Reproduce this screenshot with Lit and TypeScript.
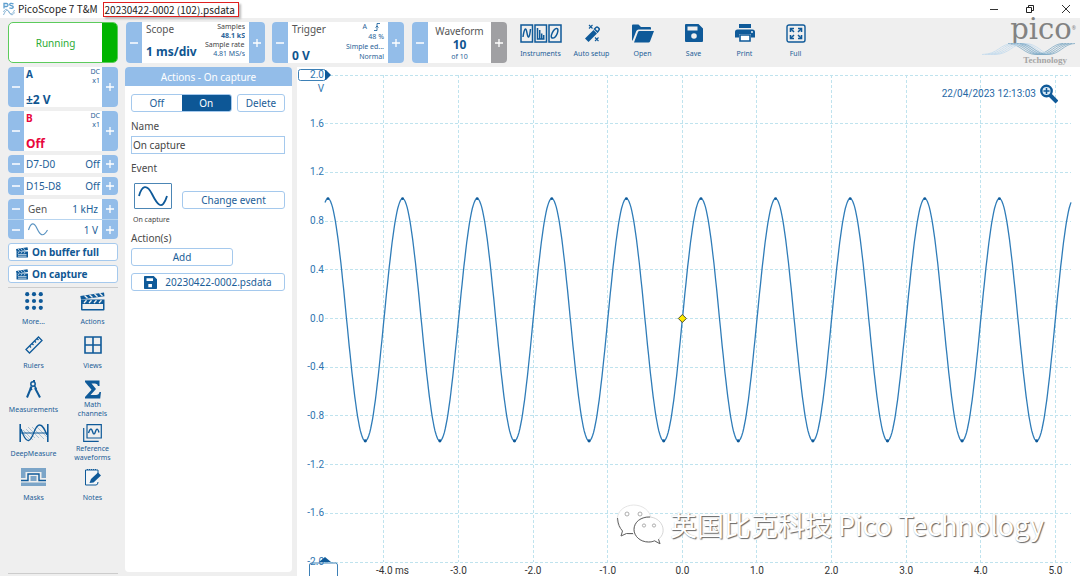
import { LitElement, html, svg, css } from "lit";
import { customElement, property, state } from "lit/decorators.js";
import { classMap } from "lit/directives/class-map.js";

const ink = "#0f5a99";

const icons = {
  app: svg`<svg width="12" height="14" viewBox="0 0 12 14"><path d="M1 6.500V1.500h2.500a1.500 1.500 0 0 1 0 3H1M10.500 1.800C8 .8 6.500 1.500 6.700 2.600c.3 1.400 3.600.8 3.600 2.500 0 1.200-2 1.600-3.900.8" fill="none" stroke="#5f9fce" stroke-width="1.300"/><path d="M.5 10c2-4 3.500-3 5.500 0s3.500 4 5.500.5M.5 13c2-5 4-6 5.500-3s3 3 5.500-2" fill="none" stroke="#86b3d3"/></svg>`,
  instruments: svg`<svg width="42" height="19" viewBox="0 0 42 19" fill="none" stroke=${ink} stroke-width="1.500"><path d="M1 1h11.500v17H1zM15 1h11.500v17H15zM29 1h12v17H29z"/><path d="M3 13C4.500 3 6 3 7 9s2.500 6 3.500-4M17.500 4v11h7M19.700 15V6M21.700 15V9.500M23.700 15v-4"/><path d="M32 14c-2-1 1-9 4.500-9.500S36.500 15 32 14z"/></svg>`,
  auto: svg`<svg width="16" height="19" viewBox="0 0 16 19"><path d="M1 14.500 9.500 6l3.500 3.500L4.500 18z" fill=${ink}/><path d="M10.500 5 12 3.500a1.500 1.500 0 0 1 2 0l.8.8a1.500 1.500 0 0 1 0 2L13.500 8z" fill="none" stroke=${ink} stroke-width="1.500"/><path d="m5 1 3.500 3.500M8.500 1 5 4.500M11 13.500l3.500 3.500M14.500 13.500 11 17" stroke=${ink} stroke-width="1.100"/></svg>`,
  open: svg`<svg width="22" height="19" viewBox="0 0 22 19"><path d="M0 17V1.500Q0 .5 1 .5h5.500L9 3h9q1 0 1 1v1.500H6.500Q5 5.500 4.300 7L1 15.500z" fill=${ink}/><path d="M2 18.500 6 8q.3-1 1.500-1H22l-4 10.500q-.4 1-1.500 1z" fill=${ink}/></svg>`,
  save: svg`<svg width="18" height="18" viewBox="0 0 18 18"><path fill-rule="evenodd" d="M1 0h12.500L18 4.500V17q0 1-1 1H1q-1 0-1-1V1q0-1 1-1zm1.500 2.500v4h10v-4zM9 9.200a2.800 2.800 0 1 0 0 5.600 2.800 2.800 0 0 0 0-5.600z" fill=${ink}/></svg>`,
  print: svg`<svg width="20" height="18" viewBox="0 0 20 18"><path d="M4 0h12v4H4zM2.500 5.500h15A2.500 2.500 0 0 1 20 8v5.500h-4V10H4v3.500H0V8a2.500 2.500 0 0 1 2.500-2.500z" fill=${ink}/><path d="M5 11h10v6H5z" fill="#fff" stroke=${ink} stroke-width="1.600"/><circle cx="17" cy="8" r=".9" fill="#fff"/></svg>`,
  full: svg`<svg width="20" height="19" viewBox="0 0 20 19" fill="none" stroke=${ink}><rect x="1" y="1" width="18" height="17" rx="2" stroke-width="1.400"/><path d="m8 8-3-3m7 3 3-3m-7 6-3 3m7-3 3 3" stroke-width="1.500"/><path d="M4.500 8V4.500H8M12 4.500h3.500V8M4.500 11v3.500H8M12 14.500h3.500V11" stroke-width="1.600"/></svg>`,
  more: svg`<svg width="18" height="18" viewBox="0 0 18 18" fill=${ink}>${[2.2, 9, 15.8].map((y) => [2.2, 9, 15.8].map((x) => svg`<circle cx=${x} cy=${y} r="2.100"/>`))}</svg>`,
  clap: svg`<svg width="25" height="19" viewBox="0 0 25 19"><path d="M.3 4 24 .5l.5 3.700L1 7.500z" fill=${ink}/><path d="M1 7.500h23.500v10q0 1-1 1H2q-1 0-1-1z" fill=${ink}/><path d="M2.500 12h20.500v5H2.500z" fill="#efefef"/><path d="m4.500 3.500 3 2.800m2-3.600 3 2.800m2-3.600 3 2.800m2-3.500 3 2.800M6.500 8.200 4 11m7.500-2.800L9 11m7.500-2.800L14 11m7.500-2.800L19 11" stroke="#efefef" stroke-width="1.300"/></svg>`,
  clapSmall: svg`<svg width="12" height="11" viewBox="0 0 12 11"><path d="M0 2 11.500.300 12 3 .5 4.500zM.5 4.500H12V10q0 .6-.6.600H1Q.5 10.600.5 10z" fill=${ink}/><path d="m2 2 1.500 1.600M4.700 1.500l1.500 1.700m1.200-2 1.500 1.600M3 5 2 6.500M6 5 5 6.500M9 5 8 6.500M2 7.600h8.500M2 9.200h8.500" stroke="#fff" stroke-width=".7"/></svg>`,
  rulers: svg`<svg width="18" height="18" viewBox="0 0 18 18" fill="none" stroke=${ink} stroke-width="1.300"><path d="M1 13.500 13.500 1 17 4.500 4.500 17z"/><path d="m4.500 10 1.500 1.500M7 7.500l1.500 1.500M9.500 5 11 6.500M12 2.500 13.500 4" /></svg>`,
  views: svg`<svg width="18" height="18" viewBox="0 0 18 18" fill="none" stroke=${ink} stroke-width="1.600"><path d="M1 1h16v16H1zM9 1v16M1 9h16"/></svg>`,
  measure: svg`<svg width="15" height="18" viewBox="0 0 15 18" fill="none" stroke=${ink}><circle cx="7" cy="4" r="2.200" stroke-width="1.500"/><path d="M8 2V0M5.500 6.500 1 17.500M9 8l5 9.500" stroke-width="2"/><path d="M4 7.500 6 10M8.500 6l2 3" stroke-width="1.500"/></svg>`,
  sigma: svg`<svg width="16" height="19" viewBox="0 0 16 19"><path d="M0 .5h14.500V6H13q-.3-2.500-3-2.500H6.500L11 9l-5.500 6H11q3 0 3.500-3H16l-.8 6.500H0V17l6.500-7.200L0 2z" fill=${ink}/></svg>`,
  deep: svg`<svg width="30" height="18" viewBox="0 0 30 18" fill="none" stroke=${ink}><path d="m2 7 8 8m-6-9 10 10M7 5l9 9M9 3l11 11M13 3l12 12M17 2l11 11" stroke-width=".5" opacity=".6"/><path d="M1.200 0v18M28.800 0v18" stroke-width="1.600"/><path d="M1.500 9h27" /><path d="M2 5c3 9 5 12 7.500 11.500C15 15 15 1 20.500 1 24 1 26 6 28 11" stroke-width="1.300"/></svg>`,
  reference: svg`<svg width="19" height="18" viewBox="0 0 19 18" fill="none" stroke=${ink} stroke-width="1.200"><path d="M4 .7h14.300V14H4z"/><path d="M.7 4v13.300h15"/><path d="M5.500 9C7 4 8.500 4 9.500 7.500s2 3.500 3 0 2.500-3 3.500 1" stroke-width="1.400"/></svg>`,
  masks: svg`<svg width="25" height="18" viewBox="0 0 25 18"><path d="M0 0h25v10h-4.500V4h-16v6H0zM0 14.500h25V18H0zM9.500 8h6v5h-6z" fill="#7ca5c8"/><path d="M0 12.500h7V6h11v6.500h7" fill="none" stroke=${ink} stroke-width="1.400"/></svg>`,
  notes: svg`<svg width="17" height="18" viewBox="0 0 17 18"><path d="M14 6V2H1.500v15H12q2 0 2-3" fill="#f4f6f8" stroke=${ink}/><path d="M3 1.500h10" stroke=${ink} stroke-dasharray="1 1"/><path d="m5.500 15 1.500-4 7-6.500 3 3-7.500 7z" fill=${ink}/></svg>`,
  saveSmall: svg`<svg width="13" height="13" viewBox="0 0 18 18"><path fill-rule="evenodd" d="M1 0h12.500L18 4.500V17q0 1-1 1H1q-1 0-1-1V1q0-1 1-1zm2.500 3v4h9V3zM6 11v4.500h5V11z" fill=${ink}/></svg>`,
  sine: svg`<svg width="20" height="14" viewBox="0 0 20 14" fill="none" stroke="#5b94c2" stroke-width="1.200"><path d="M.5 7C3-.8 6-.8 9 5.500S15 15 19.500 7"/></svg>`,
  sineBox: svg`<svg width="30" height="21" viewBox="0 0 30 21" fill="none" stroke=${ink} stroke-width="1.800"><path d="M1 10C4-1 9-2 14 8s10 18 15 2"/></svg>`,
  edge: svg`<svg width="6" height="8" viewBox="0 0 6 8" fill="none" stroke=${ink} stroke-width=".8"><path d="M0 7.500h3V.5h3M1.500 4.500 3 3l1.500 1.500"/></svg>`,
};

const base = css`
  * { box-sizing: border-box; }
  button {
    font: inherit;
    color: inherit;
    margin: 0;
    padding: 0;
    border: 0;
    background: none;
    display: flex;
    align-items: center;
    justify-content: center;
  }
  svg { display: block; flex: none; }
`;

@customElement("step-tile")
class StepTile extends LitElement {
  @property() label = "";
  @property({ type: Boolean }) atEnd = false;

  static styles = [
    base,
    css`
      :host { display: flex; border-radius: 4px; overflow: hidden; background: #fff; }
      .step { flex: none; width: 16px; background: #93bde9; }
      .end { background: #a0a0a3; }
      .body { flex: 1; min-width: 0; display: flex; }
    `,
  ];

  render() {
    return html`
      <button class="step" aria-label="Decrease ${this.label}">
        <svg width="8" height="8"><path d="M0 4h8" stroke="#fff" stroke-width="1.300" /></svg>
      </button>
      <div class="body"><slot></slot></div>
      <button class=${classMap({ step: true, end: this.atEnd })} aria-label="Increase ${this.label}">
        <svg width="8" height="8"><path d="M0 4h8M4 0v8" stroke="#fff" stroke-width="1.300" /></svg>
      </button>
    `;
  }
}

@customElement("scope-chart")
class ScopeChart extends LitElement {
  @state() private w = 783;
  @state() private h = 509;
  private observer?: ResizeObserver;

  static styles = [
    base,
    css`
      :host { display: block; position: relative; background: #fff; overflow: hidden; min-width: 0; }
      .plot { position: absolute; inset: 0; font-family: Roboto, sans-serif; font-size: 10px; }
      .grid { stroke: #bfe3ee; stroke-width: 1; stroke-dasharray: 3 2; fill: none; }
      .wave { stroke: #2f7cb8; stroke-width: 1.3; fill: none; }
      .volts { fill: #2f76b0; text-anchor: end; }
      .time { fill: #333; text-anchor: middle; }
      .first { text-anchor: start; }
      .handle { fill: #fff; stroke: #3d80b6; }
      .axis { fill: none; }
      .solid { fill: #0f5a99; }
      .trigger { fill: #ffec00; stroke: #4d4d30; }
      .stamp {
        position: absolute; top: 17px; right: 22px; display: flex; align-items: center; gap: 4px;
        font-family: Roboto, sans-serif; font-size: 10px; color: #1f68a5;
      }
      .mark {
        position: absolute; right: 36px; bottom: 30px; display: flex; align-items: center; gap: 6px;
        font-family: "Noto Sans CJK SC", sans-serif; font-size: 27px; line-height: 40px;
        color: #fff; text-shadow: 1px 1px 1px #666, 0 0 1px #ccc; white-space: nowrap;
      }
    `,
  ];

  connectedCallback() {
    super.connectedCallback();
    this.observer = new ResizeObserver(([entry]) => {
      this.w = entry.contentRect.width;
      this.h = entry.contentRect.height;
    });
    this.observer.observe(this);
  }

  disconnectedCallback() {
    this.observer?.disconnect();
    super.disconnectedCallback();
  }

  render() {
    const left = 28, top = 8, right = this.w - 9, bottom = this.h - 14;
    const start = -4.79;
    const x = (t: number) => left + ((t - start) / 10) * (right - left);
    const y = (v: number) => top + ((2 - v) / 4) * (bottom - top);
    const volts = Array.from({ length: 11 }, (_, i) => 2 - i * 0.4);
    const times = Array.from({ length: 10 }, (_, i) => i - 4);
    const points: string[] = [];
    for (let i = 0; i <= 800; i++) {
      const t = start + i / 80;
      points.push(`${x(t).toFixed(1)},${y(Math.sin(2 * Math.PI * t) * 0.995 - 0.01).toFixed(1)}`);
    }
    const snap = (n: number) => Math.floor(n) + 0.5;
    const label = (n: number) => (Math.abs(n) < 0.01 ? 0 : n).toFixed(1);
    const peaks = [-4.75, -3.75, -2.75, -1.75, -0.75, 0.25, 1.25, 2.25, 3.25, 4.25];

    return html`
      <svg class="plot" width=${this.w} height=${this.h}>
        ${volts.map((v) => svg`<path class="grid" d="M${left} ${snap(y(v))}H${right}"/>`)}
        ${times.map((t) => svg`<path class="grid" d="M${snap(x(t))} ${top}V${bottom}"/>`)}
        <rect class="handle" x="1.500" y="2.500" width="27" height="11" rx="2" />
        <path class="solid" d="M28 3h1l5 5-5 5h-1z" />
        ${volts.map((v) => svg`<text class="volts" x="27" y=${Math.round(y(v)) + 3}>${label(v)}</text>`)}
        <text class="volts" x="27" y="25">V</text>
        <path class="handle axis" d="M12.500 ${this.h}v-11q0-2 2-2h24q2 0 2 2v11" />
        <path class="solid" d="M22 ${this.h - 14}l6-5 6 5z" />
        ${times.map((t, i) =>
          i === 0
            ? svg`<text class="time first" x=${x(t) - 8} y=${this.h - 2}>${label(t)} ms</text>`
            : svg`<text class="time" x=${x(t)} y=${this.h - 2}>${label(t)}</text>`
        )}
        <polyline class="wave" points=${points.join(" ")} />
        ${peaks.map((t) => svg`
          <circle class="solid" cx=${x(t)} cy=${y(0.985)} r="1.400"/>
          <circle class="solid" cx=${x(t + 0.5)} cy=${y(-1.005)} r="1.600"/>`)}
        <path class="trigger" d="M${x(0)} ${y(0) - 4}l4 4-4 4-4-4z" />
      </svg>
      <div class="stamp">
        <span>22/04/2023 12:13:03</span>
        <svg width="18" height="20" viewBox="0 0 18 20">
          <path d="m10 11 7 7" stroke=${ink} stroke-width="4" />
          <circle cx="6.500" cy="7" r="5.200" fill="#dcecf7" stroke=${ink} stroke-width="2.400" />
          <path d="M6.500 4v6M3.500 7h6" stroke=${ink} stroke-width="1.500" />
        </svg>
      </div>
      <div class="mark">
        <svg width="48" height="42" viewBox="0 0 48 42">
          <g fill="#fff" stroke="#999" stroke-width=".8">
            <path d="M18 30c-2.500.5-5.500.4-7.500-.5L5 32l1.500-5C-3 19 0 2 17.500 1 27 1 34 7 35 14" stroke="#ddd" />
            <path d="M32.500 13C23 13 18 19 18 25.500S24 38 32.500 38c2.300 0 4.500-.4 6-1.200l5.500 3-1.500-4.600C52 28 46 13 32.500 13z" stroke="#ccc" />
            <circle cx="11" cy="10" r="2" /><circle cx="24" cy="10" r="2" />
            <circle cx="28" cy="21.500" r="1.600" /><circle cx="38" cy="21.500" r="1.600" />
          </g>
          <path d="M34 13c-9-.3-16 5-16 12.500C18 32 24 38 32.500 38c2.300 0 4.500-.4 6-1.200l5.500 3-1.500-4.600M1.500 14c.5 6 2 9.500 5 13L5 32l5.500-2.500H17" fill="none" stroke="#666" />
        </svg>
        <span>英国比克科技 Pico Technology</span>
      </div>
    `;
  }
}

@customElement("app-root")
class AppRoot extends LitElement {
  @state() private enabled = true;

  static styles = [
    base,
    css`
      :host {
        display: flex; flex-direction: column; height: 100vh; overflow: hidden; background: #efefef;
        font-family: "Noto Sans", sans-serif; font-size: 10px; line-height: 14px; color: #1c5e98;
      }
      .title { flex: none; height: 18px; display: flex; align-items: center; background: #fff; color: #222; padding: 0 8px 0 3px; font-family: "Noto Sans CJK SC", sans-serif; }
      .name { padding: 0 5px 0 3px; }
      .file { border: 1px solid #e02020; padding: 0 3px 0 1px; box-shadow: 2px 2px 2px #bbb; line-height: 13px; }
      .window { margin-left: auto; display: flex; gap: 24px; }
      .window button { width: 12px; height: 12px; }
      .body { flex: 1; min-height: 0; display: flex; }
      .side { flex: none; width: 118px; padding: 4px 0 2px 8px; display: flex; flex-direction: column; gap: 4px; }
      .main { flex: 1; min-width: 0; display: flex; flex-direction: column; }
      .work { flex: 1; min-height: 0; display: flex; padding-left: 7px; gap: 5px; }
      scope-chart { flex: 1; }

      .run { height: 41px; border: 1px solid #5ccb5c; border-radius: 5px; background: #fff; overflow: hidden; color: #2cab33; align-items: stretch; }
      .run-text { flex: 1; align-self: center; }
      .run-bar { width: 15px; background: #00b400; }
      .tall { height: 40px; }
      .low { height: 18px; }
      .channel { flex: 1; padding: 0 2px; display: flex; justify-content: space-between; font-weight: 700; color: #115793; }
      .col { display: flex; flex-direction: column; justify-content: space-between; }
      .raised { padding-bottom: 4px; }
      .big { font-size: 12px; font-weight: 700; color: #0f5590; white-space: nowrap; }
      .red, .red .big { color: #e8063c; }
      .tiny { font-size: 7px; line-height: 9px; font-weight: 400; text-align: right; color: #2a6398; white-space: nowrap; }
      .line { flex: 1; display: flex; justify-content: space-between; align-items: center; padding: 0 2px; }
      .gen { height: 40px; display: grid; grid-template-rows: 1fr 1fr; border-radius: 4px; overflow: hidden; }
      .gen step-tile { border-radius: 0; }
      .gen step-tile + step-tile { border-top: 1px solid #b8d5f0; }
      .gen .line { padding: 0 4px; }
      .grey { color: #555; }
      .outline { height: 18px; border: 1px solid #a5c9ed; border-radius: 3px; background: #fff; }
      .quick { justify-content: flex-start; gap: 4px; padding-left: 7px; font-weight: 700; color: #115793; }
      .rule { height: 1px; flex: none; background: #ccc; }
      .tools { display: grid; grid-template-columns: 1fr 1fr; row-gap: 4px; margin: -2px -4px 0; }
      .tool { flex-direction: column; font-size: 7px; line-height: 9px; }
      .icon { height: 22px; display: flex; align-items: center; }
      .caption { height: 18px; display: flex; align-items: center; justify-content: center; max-width: 46px; text-align: center; }
      .foot { margin-top: auto; }

      .bar { flex: none; height: 49px; display: flex; padding: 4px 6px 0 8px; }
      .bar step-tile { height: 41px; flex: none; }
      .scope { width: 139px; margin-right: 7px; }
      .trigger { width: 132px; margin-right: 8px; }
      .waveform { width: 95px; margin-right: 8px; }
      .setting { flex: 1; min-width: 0; display: flex; justify-content: space-between; padding: 0 4px; }
      .clip { width: 40px; overflow: hidden; display: flex; flex-direction: column; }
      .clip .tiny { align-self: flex-end; }
      .clip .wide { align-self: flex-start; }
      .strong { font-weight: 700; }
      .dark { color: #444; }
      .loose { line-height: 10px; }
      .edge { display: flex; justify-content: flex-end; align-items: center; gap: 7px; padding-right: 4px; }
      .centre { flex: 1; display: flex; flex-direction: column; align-items: center; justify-content: center; }
      .act { width: 51px; height: 40px; flex: none; flex-direction: column; justify-content: flex-start; font-size: 7px; line-height: 9px; }
      .act .caption { max-width: none; white-space: nowrap; }
      .logo { margin: -12px -2px 0 auto; display: flex; flex-direction: column; align-items: flex-end; color: #828282; }
      .pico { display: flex; font-family: "DejaVu Serif", serif; font-size: 29px; line-height: 38px; height: 33px; }
      .sup { font-family: "Noto Sans", sans-serif; font-size: 5px; line-height: 8px; padding-top: 14px; }
      .tech { font-family: "Liberation Serif", serif; font-weight: 700; font-size: 9px; line-height: 10px; color: #a5a5a5; padding-right: 9px; }

      .panel { flex: none; width: 167px; margin-bottom: 4px; border-radius: 4px; background: #fff; overflow: hidden; }
      .head { height: 19px; display: flex; align-items: center; justify-content: center; background: #93bde9; color: #fff; }
      .form { padding: 8px 7px 0 6px; display: flex; flex-direction: column; }
      .row { display: flex; gap: 5px; }
      .switch { flex: 1; display: flex; height: 18px; border: 1px solid #a5c9ed; border-radius: 3px; overflow: hidden; background: #fff; }
      .switch button { flex: 1; }
      .switch .on { background: #0d5796; color: #fff; }
      .delete { width: 48px; }
      .text { color: #4a4a4a; margin: 7px 0 3px; }
      .field { height: 18px; width: 100%; border: 1px solid #a5c9ed; border-radius: 0; padding: 0 1px; font: inherit; color: #444; background: #fff; outline: 0; }
      .event { display: flex; align-items: center; justify-content: space-between; padding: 5px 0 0 3px; }
      .thumb { width: 38px; height: 26px; border: 1px solid #4c86b5; border-radius: 1px; }
      .change { width: 103px; align-self: flex-end; }
      .note { font-size: 7px; line-height: 9px; color: #444; padding: 6px 0 0 2px; }
      .add { width: 102px; margin-bottom: 7px; }
      .saved { gap: 8px; }
    `,
  ];

  private tool(icon: unknown, text: string) {
    return html`<button class="tool"><span class="icon">${icon}</span><span class="caption">${text}</span></button>`;
  }

  private act(icon: unknown, text: string) {
    return html`<button class="act"><span class="icon">${icon}</span><span class="caption">${text}</span></button>`;
  }

  private logoWaves() {
    return svg`<svg width="94" height="12" viewBox="0 0 94 12" fill="none">
      ${[0, 3, 6, 9, 12].map((d) => svg`
        <path d="M${d} 11.500C${16 + d} 11.500 ${18 + d} .5 ${31 + d} .5S${48 + d} 11.500 ${57 + d} 11.500" stroke="#c3daee" stroke-width=".8"/>
        <path d="M${26 + d} .5C${38 + d} .5 ${42 + d} 11.500 ${54 + d} 11.500S${70 + d} .5 ${81 + d} .5" stroke="#7fa9c4" stroke-width=".8"/>`)}
    </svg>`;
  }

  render() {
    return html`
      <header class="title">
        ${icons.app}<span class="name">PicoScope 7 T&amp;M</span><span class="file">20230422-0002 (102).psdata</span>
        <div class="window">
          <button aria-label="Minimize"><svg width="10" height="10"><path d="M1 5.500h8" stroke="#333" /></svg></button>
          <button aria-label="Restore"><svg width="10" height="10" fill="none" stroke="#222"><path d="M1.500 3.500h5v5h-5zM3.500 3V1.500h5v5H7" /></svg></button>
          <button aria-label="Close"><svg width="10" height="10"><path d="m1 1 8 8M9 1 1 9" stroke="#333" /></svg></button>
        </div>
      </header>
      <div class="body">
        <aside class="side">
          <button class="run"><span class="run-text">Running</span><span class="run-bar"></span></button>
          <step-tile class="tall" label="A range">
            <div class="channel"><div class="col"><span>A</span><span class="big">±2 V</span></div><div class="tiny">DC<br />x1</div></div>
          </step-tile>
          <step-tile class="tall" label="B range">
            <div class="channel red"><div class="col"><span>B</span><span class="big">Off</span></div><div class="tiny">DC<br />x1</div></div>
          </step-tile>
          <step-tile class="low" label="D7-D0"><div class="line"><span>D7-D0</span><span>Off</span></div></step-tile>
          <step-tile class="low" label="D15-D8"><div class="line"><span>D15-D8</span><span>Off</span></div></step-tile>
          <div class="gen">
            <step-tile label="frequency"><div class="line"><span class="grey">Gen</span><span>1 kHz</span></div></step-tile>
            <step-tile label="amplitude"><div class="line">${icons.sine}<span>1 V</span></div></step-tile>
          </div>
          <button class="outline quick">${icons.clapSmall}On buffer full</button>
          <button class="outline quick">${icons.clapSmall}On capture</button>
          <div class="rule"></div>
          <nav class="tools">
            ${this.tool(icons.more, "More...")} ${this.tool(icons.clap, "Actions")}
            ${this.tool(icons.rulers, "Rulers")} ${this.tool(icons.views, "Views")}
            ${this.tool(icons.measure, "Measurements")} ${this.tool(icons.sigma, "Math channels")}
            ${this.tool(icons.deep, "DeepMeasure")} ${this.tool(icons.reference, "Reference waveforms")}
            ${this.tool(icons.masks, "Masks")} ${this.tool(icons.notes, "Notes")}
          </nav>
          <div class="rule foot"></div>
        </aside>
        <main class="main">
          <div class="bar">
            <step-tile class="scope" label="timebase">
              <div class="setting">
                <div class="col raised"><span class="grey">Scope</span><span class="big">1 ms/div</span></div>
                <div class="clip">
                  <span class="tiny dark">Samples</span><span class="tiny strong">48.1 kS</span>
                  <span class="tiny dark wide">Sample rate</span><span class="tiny">4.81 MS/s</span>
                </div>
              </div>
            </step-tile>
            <step-tile class="trigger" label="trigger level">
              <div class="setting">
                <div class="col"><span class="grey">Trigger</span><span class="big">0 V</span></div>
                <div class="tiny loose"><div class="edge">A ${icons.edge}</div>48 %<br />Simple ed...<br />Normal</div>
              </div>
            </step-tile>
            <step-tile class="waveform" label="waveform" .atEnd=${true}>
              <div class="centre"><span class="grey">Waveform</span><span class="big">10</span><span class="tiny">of 10</span></div>
            </step-tile>
            ${this.act(icons.instruments, "Instruments")} ${this.act(icons.auto, "Auto setup")}
            ${this.act(icons.open, "Open")} ${this.act(icons.save, "Save")}
            ${this.act(icons.print, "Print")} ${this.act(icons.full, "Full")}
            <div class="logo">
              <div class="pico">pico<span class="sup">®</span></div>
              ${this.logoWaves()}
              <div class="tech">Technology</div>
            </div>
          </div>
          <div class="work">
            <section class="panel">
              <div class="head">Actions - On capture</div>
              <div class="form">
                <div class="row">
                  <div class="switch">
                    <button class=${classMap({ on: !this.enabled })} @click=${() => (this.enabled = false)}>Off</button>
                    <button class=${classMap({ on: this.enabled })} @click=${() => (this.enabled = true)}>On</button>
                  </div>
                  <button class="outline delete">Delete</button>
                </div>
                <label class="text" for="name">Name</label>
                <input class="field" id="name" type="text" .value=${"On capture"} />
                <div class="text">Event</div>
                <div class="event"><button class="thumb" aria-label="On capture event">${icons.sineBox}</button><button class="outline change">Change event</button></div>
                <div class="note">On capture</div>
                <div class="text">Action(s)</div>
                <button class="outline add">Add</button>
                <button class="outline saved">${icons.saveSmall}20230422-0002.psdata</button>
              </div>
            </section>
            <scope-chart></scope-chart>
          </div>
        </main>
      </div>
    `;
  }
}
